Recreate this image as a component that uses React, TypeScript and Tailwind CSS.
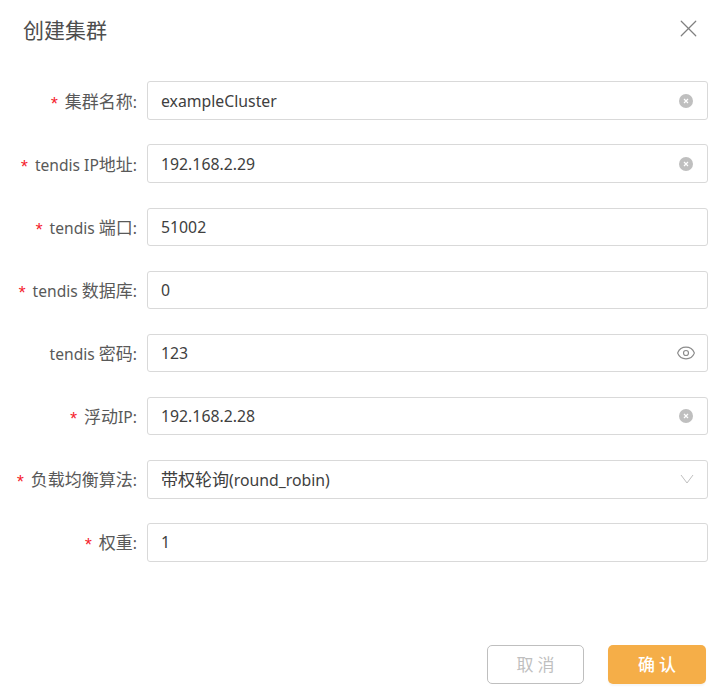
import { X, Eye } from "lucide-react";

const font = { fontFamily: '"Noto Sans", "Noto Sans CJK SC", sans-serif' };

function ClearIcon() {
  return (
    <svg width="14" height="14" viewBox="0 0 14 14">
      <circle cx="7" cy="7" r="7" fill="#bfbfbf" />
      <path d="M5 5l4 4M9 5L5 9" stroke="#fff" strokeWidth="1.2" />
    </svg>
  );
}

function DownIcon() {
  return (
    <svg width="14" height="10" viewBox="0 0 14 10" fill="none" className="-mr-[1px]">
      <path d="M1 1l6 8 6-8" stroke="#bfbfbf" strokeWidth="1" />
    </svg>
  );
}

// chinese runs are a bit bigger than the latin ones in the reference
function Cjk({ children }: { children: string }) {
  return <span className="text-[17px]">{children}</span>;
}

type RowProps = {
  label: React.ReactNode;
  value: React.ReactNode;
  required?: boolean;
  icon?: "clear" | "eye" | "down";
};

function Row({ label, value, required = true, icon }: RowProps) {
  return (
    <div className="flex items-center h-[38.7px]">
      <label className="w-[147px] shrink-0 pr-[10px] pt-[2px] flex justify-end items-center text-[15.6px] text-[#595959] whitespace-nowrap">
        {required && (
          <span className="text-[#f5222d] mr-[5px] text-[18px] leading-none translate-y-[3px] font-['Liberation_Mono'] font-thin">
            *
          </span>
        )}
        <span>{label}:</span>
      </label>
      <div className="flex-1 h-full border border-[#d9d9d9] rounded-[3px] flex items-center justify-between pl-[13px] pr-[14px] text-[15.8px] text-[#404040]">
        <span className="pt-[2px]">{value}</span>
        {icon === "clear" && <ClearIcon />}
        {icon === "eye" && <Eye size={20} strokeWidth={1.4} className="text-[#8c8c8c] -mr-[3px]" />}
        {icon === "down" && <DownIcon />}
      </div>
    </div>
  );
}

export default function App() {
  return (
    <div className="w-[721px] h-[693px] bg-white flex flex-col overflow-hidden" style={font}>
      <div className="h-[81.35px] shrink-0 flex justify-between pl-[23px] pr-[18px] pt-[13px]">
        <h2 className="text-[21px] leading-[34px] text-[#4d4d4d]">创建集群</h2>
        <X size={29} strokeWidth={1} className="text-[#808080] mt-[1px]" />
      </div>
      <div className="flex flex-col gap-[24.4px] pr-[13px]">
        <Row label={<Cjk>集群名称</Cjk>} value="exampleCluster" icon="clear" />
        <Row label={<>tendis IP<Cjk>地址</Cjk></>} value="192.168.2.29" icon="clear" />
        <Row label={<>tendis <Cjk>端口</Cjk></>} value="51002" />
        <Row label={<>tendis <Cjk>数据库</Cjk></>} value="0" />
        <Row label={<>tendis <Cjk>密码</Cjk></>} value="123" required={false} icon="eye" />
        <Row label={<><Cjk>浮动</Cjk>IP</>} value="192.168.2.28" icon="clear" />
        <Row label={<Cjk>负载均衡算法</Cjk>} value={<><Cjk>带权轮询</Cjk>(round_robin)</>} icon="down" />
        <Row label={<Cjk>权重</Cjk>} value="1" />
      </div>
      <div className="mt-[83.25px] flex justify-end gap-[24px] pr-[15px]">
        <button className="w-[97px] h-[39px] pl-[4px] border border-[#bfbfbf] rounded-[5px] text-[17px] tracking-[4px] text-[#bfbfbf] bg-white">
          取消
        </button>
        <button className="w-[98px] h-[39px] pl-[4px] rounded-[5px] text-[17px] font-medium tracking-[4px] text-white bg-[#f5ae48] shadow-[0_2px_2px_rgba(0,0,0,0.04)]">
          确认
        </button>
      </div>
    </div>
  );
}
